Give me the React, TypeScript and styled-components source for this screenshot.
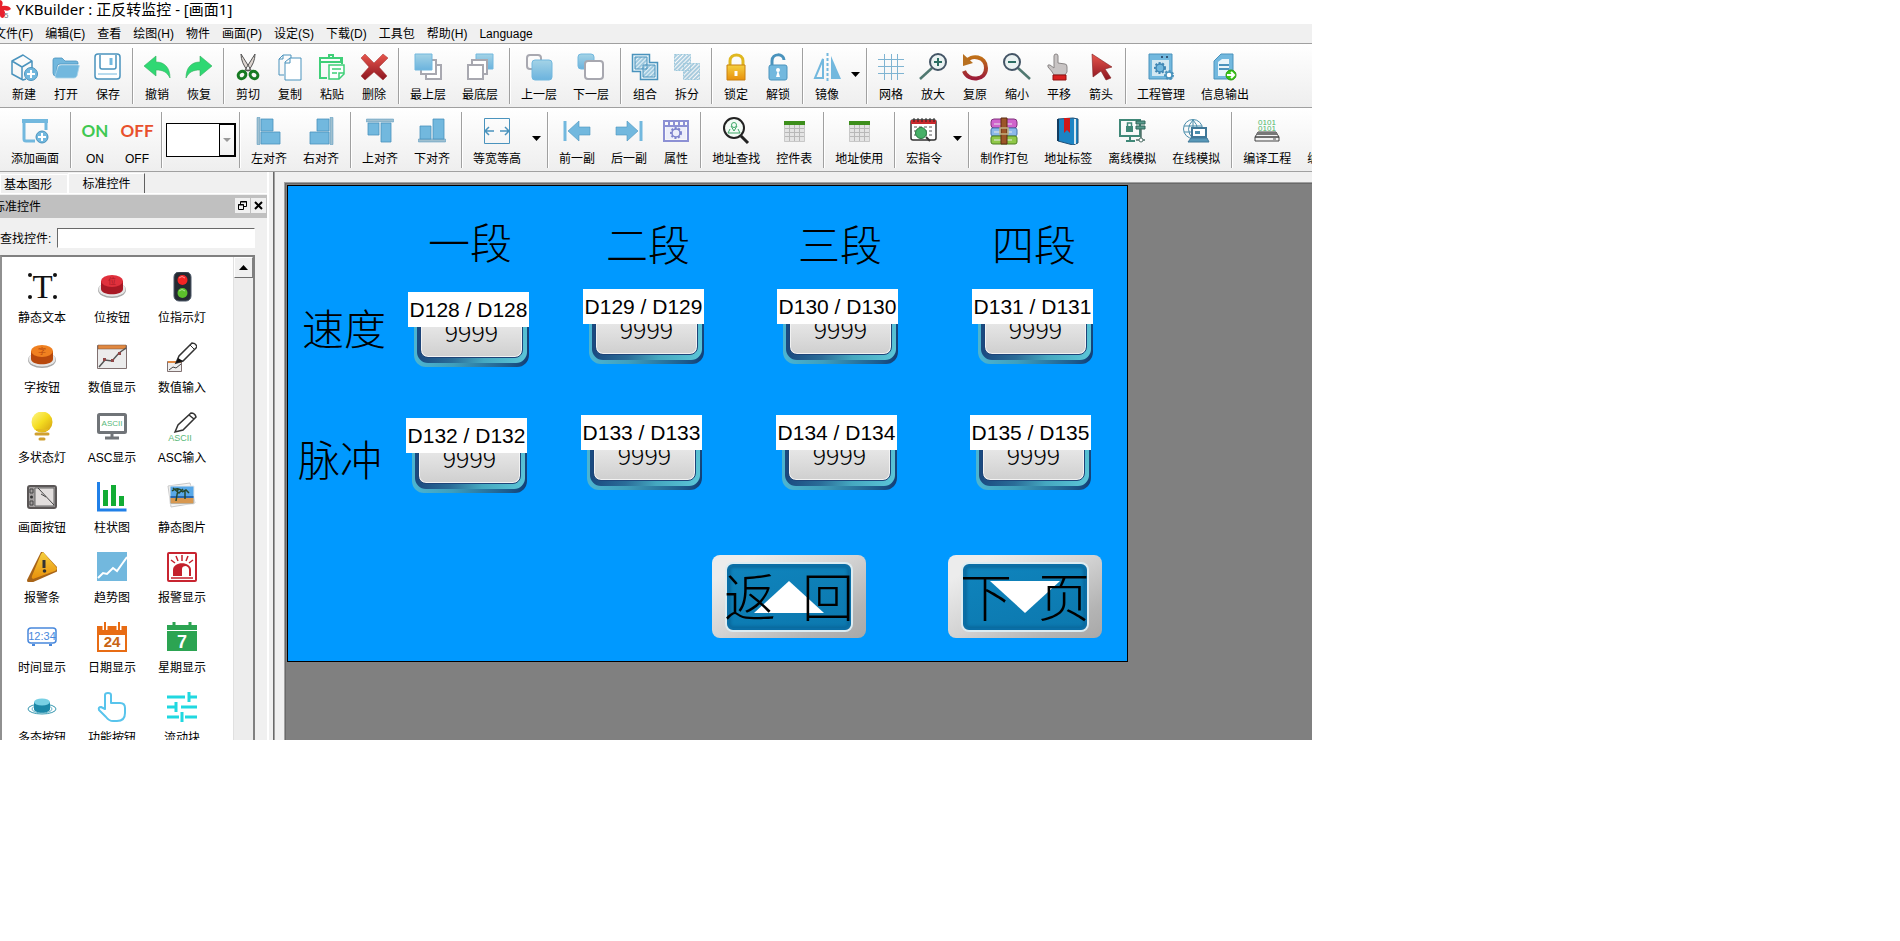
import React, { ReactNode } from "react";
import styled, { createGlobalStyle } from "styled-components";

const uiFont = `"Liberation Sans", "Noto Sans CJK SC", sans-serif`;
const songFont = `"Noto Sans CJK SC", serif`;

const GlobalStyle = createGlobalStyle`
  *, *::before, *::after { box-sizing: border-box; }
  body { margin: 0; background: #fff; font: 12px/16px ${uiFont}; color: #000; }
  button { font: inherit; color: inherit; margin: 0; padding: 0; border: 0; background: none; }
  svg { display: block; }
`;

const Window = styled.div`
  display: flex;
  flex-direction: column;
  width: calc(100% - 588px);
  height: calc(100vh - 201px);
  background: #f0f0f0;
  overflow: hidden;
`;

const TitleBar = styled.header`
  display: flex;
  flex: none;
  gap: 5px;
  height: 24px;
  background: #fff;
`;

const Title = styled.h1`
  margin: 0;
  font: 400 15px/18px "Noto Sans", "Noto Sans CJK SC", sans-serif;
  white-space: nowrap;
`;

const MenuBar = styled.nav`
  display: flex;
  flex: none;
  gap: 12px;
  height: 20px;
  padding-top: 2px;
  border-bottom: 1px solid #a0a0a0;
  white-space: nowrap;
`;

const MenuItem = styled.button`
  flex: none;
  height: 16px;
  &:first-child { margin-left: -6px; }
`;

const ToolBar = styled.div`
  display: flex;
  flex: none;
  height: 64px;
  padding-left: 3px;
  border-bottom: 1px solid #a0a0a0;
  background: linear-gradient(#fff, #eee);
  overflow: hidden;
`;

const Separator = styled.div`
  flex: none;
  width: 2px;
  height: 56px;
  margin: 4px 2px 0 3px;
  border-left: 1px solid #a0a0a0;
  border-right: 1px solid #fff;
`;

const ToolButton = styled.button<{ $narrow?: boolean }>`
  display: flex;
  flex: none;
  flex-direction: column;
  align-items: center;
  gap: 6px;
  min-width: 42px;
  padding: 9px ${(p) => (p.$narrow ? 7 : 8)}px 0;
  white-space: nowrap;
`;

const DropArrow = styled.button`
  display: flex;
  flex: none;
  justify-content: center;
  width: 15px;
  padding-top: 28px;
`;

const Word = styled.span<{ $color: string }>`
  display: flex;
  justify-content: center;
  width: 28px;
  height: 28px;
  font: 700 17px/28px Lato, sans-serif;
  color: ${(p) => p.$color};
`;

const Combo = styled.div`
  display: grid;
  flex: none;
  width: 70px;
  height: 34px;
  margin: 15px 0 0 1px;
  background: #fff;
`;

const ComboSelect = styled.select`
  grid-area: 1 / 1;
  width: 70px;
  height: 34px;
  border: 1px solid #000;
  border-radius: 0;
  background: transparent;
  appearance: none;
`;

const ComboArrow = styled.span`
  display: grid;
  grid-area: 1 / 1;
  place-items: center;
  justify-self: end;
  width: 17px;
  height: 34px;
  border: 2px solid #000;
  border-left-width: 1px;
  background: linear-gradient(#fff, #f0f0f0);
  pointer-events: none;
`;

const Work = styled.div`
  display: flex;
  flex: 1;
  min-height: 0;
`;

const Dock = styled.aside`
  display: flex;
  flex: none;
  flex-direction: column;
  width: 269px;
  border-right: 2px solid #fff;
`;

const Tabs = styled.div`
  display: flex;
  flex: none;
  height: 22px;
  border-bottom: 1px solid #fff;
`;

const Tab = styled.button<{ $active?: boolean }>`
  height: 20px;
  margin-top: ${(p) => (p.$active ? 1 : 2)}px;
  width: ${(p) => (p.$active ? 77 : 68)}px;
  padding-top: 1px;
  padding-right: ${(p) => (p.$active ? 0 : 12)}px;
  border-top: 1px solid #fff;
  border-left: 1px solid #fff;
  border-right: ${(p) => (p.$active ? "1px solid #606060" : "1px solid #fff")};
  white-space: nowrap;
`;

const DockTitle = styled.div`
  display: flex;
  flex: none;
  gap: 1px;
  height: 23px;
  margin-top: 1px;
  padding: 3px 1px 0 0;
  background: #c0c0c0;
`;

const DockName = styled.h2`
  flex: 1;
  margin: 0 0 0 -7px;
  font-weight: 400;
  font-size: 12px;
  line-height: 18px;
`;

const DockButton = styled.button`
  display: grid;
  place-items: center;
  width: 15px;
  height: 15px;
  background: #f0f0f0;
`;

const Search = styled.div`
  display: flex;
  flex: none;
  align-items: center;
  gap: 6px;
  height: 20px;
  margin: 10px 12px 7px 0;
  label { padding-top: 2px; line-height: 20px; white-space: nowrap; }
  input {
    flex: 1;
    min-width: 0;
    height: 20px;
    border: 1px solid;
    border-color: #696969 #fff #fff #696969;
    border-radius: 0;
    background: #fff;
    font: inherit;
  }
`;

const List = styled.div`
  display: flex;
  flex: 1;
  min-height: 0;
  width: 255px;
  border: 2px solid #808080;
  border-bottom: 0;
  border-left-color: #909090;
  background: #fff;
  overflow: hidden;
`;

const Palette = styled.div`
  display: grid;
  flex: 1;
  grid-template-columns: repeat(3, 70px);
  grid-auto-rows: 70px;
  padding: 15px 0 0 5px;
`;

const PaletteItem = styled.button`
  display: flex;
  flex-direction: column;
  align-items: center;
  gap: 8px;
  white-space: nowrap;
`;

const Scroll = styled.div`
  flex: none;
  width: 20px;
  border-left: 1px solid #e0e0e0;
  background: #ededed;
`;

const ScrollButton = styled.button`
  display: grid;
  place-items: center;
  width: 19px;
  height: 21px;
  border: 1px solid;
  border-color: #fff #808080 #707070 #fff;
  background: #f0f0f0;
`;

const Splitter = styled.div`
  flex: none;
  width: 15px;
  border-left: 4px solid #f0f0f0;
  box-shadow: inset 1px 0 #696969, inset 2px 0 #a0a0a0;
`;

const Mdi = styled.main`
  flex: 1;
  margin-top: 10px;
  border: 1px solid #a0a0a0;
  border-width: 1px 0 0 1px;
  box-shadow: inset 1px 1px #696969;
  background: #808080;
  padding: 2px;
  overflow: hidden;
`;

const Screen = styled.section`
  position: relative;
  width: 841px;
  height: 477px;
  border: 1px solid #000;
  background: #0099ff;
`;

const Caption = styled.span<{ $x: number; $y: number }>`
  position: absolute;
  left: ${(p) => p.$x}px;
  top: ${(p) => p.$y}px;
  font: 300 42px/38px ${songFont};
  white-space: nowrap;
`;

const Register = styled.div<{ $x: number; $y: number }>`
  position: absolute;
  left: ${(p) => p.$x}px;
  top: ${(p) => p.$y}px;
  padding: 11px 0 0 6px;
`;

const Address = styled.span`
  position: absolute;
  left: 0;
  top: 0;
  width: 121px;
  height: 35px;
  background: #fff;
  font: 21px/36px ${uiFont};
  text-align: center;
  white-space: nowrap;
`;

const Bezel = styled.div`
  width: 115px;
  height: 64px;
  padding: 2px 2px 4px 3px;
  border-radius: 12px;
  background: linear-gradient(100deg, #4cb4d0 10%, #3f9fbc 40%, #1c5a8c 85%, #123c74);
`;

const Ring = styled.div`
  height: 58px;
  padding: 2px 4px 5px 3px;
  border-radius: 11px;
  background: linear-gradient(105deg, #1a4a80 12%, #2a6c98 40%, #45a8c0 65%, #5cc6d8);
`;

const Face = styled.div`
  height: 51px;
  border: 1px solid #1d4478;
  border-radius: 8px;
  background: linear-gradient(#f4f4f4, #cfcfcf);
  box-shadow: inset 0 0 0 1px #f2f2f2;
  font: 300 25px/46px ${songFont};
  text-align: center;
`;

const PageButton = styled.button<{ $x: number }>`
  position: absolute;
  left: ${(p) => p.$x}px;
  top: 369px;
  display: grid;
  place-items: center;
  width: 154px;
  height: 83px;
  border-radius: 8px;
  background: linear-gradient(150deg, #ececec 15%, #d2d2d2 50%, #b4b4b4 80%, #a8a8a8);
`;

const PageFace = styled.span`
  display: grid;
  place-items: center;
  grid-area: 1 / 1;
  width: 124px;
  height: 66px;
  border: 2px solid #0a6ea6;
  border-radius: 6px;
  background: linear-gradient(165deg, #0f84bd, #0c78ae);
  box-shadow: inset 0 0 3px 2px #0a6a9e, 0 0 0 2px #dcecf2;
`;

const PageText = styled.span`
  grid-area: 1 / 1;
  padding-bottom: 4px;
  font: 300 52px/52px ${songFont};
  white-space: nowrap;
`;

const B = "#72b8de";
const D = "#4a93bd";

const Icon = ({ size = 28, children }: { size?: number; children: ReactNode }) => (
  <svg width={size} height={size} viewBox={`0 0 ${size} ${size}`} fill="none" aria-hidden="true">
    {children}
  </svg>
);

const Shaded = () => (
  <defs>
    <linearGradient id="blue" x1="0" y1="0" x2="0" y2="1"><stop offset="0" stopColor="#a4d3e6" /><stop offset="1" stopColor="#6bb3de" /></linearGradient>
    <linearGradient id="red" x1="0" y1="0" x2="0" y2="1"><stop offset="0" stopColor="#e8564c" /><stop offset="1" stopColor="#8c1520" /></linearGradient>
    <linearGradient id="gold" x1="0" y1="0" x2="0" y2="1"><stop offset="0" stopColor="#f5d040" /><stop offset="1" stopColor="#e8900c" /></linearGradient>
    <linearGradient id="rust" x1="0" y1="0" x2="0" y2="1"><stop offset="0" stopColor="#c07018" /><stop offset="1" stopColor="#9c1c38" /></linearGradient>
    <linearGradient id="bulb" x1="0" y1="0" x2="1" y2="1"><stop offset="0" stopColor="#fff68a" /><stop offset=".5" stopColor="#f4dc20" /><stop offset="1" stopColor="#d09a10" /></linearGradient>
    <pattern id="hatch" width="3" height="3" patternUnits="userSpaceOnUse" patternTransform="rotate(45)"><path d="M1 0V3" stroke="#5a9fc4" strokeWidth="1" /></pattern>
  </defs>
);

const Gear = ({ x, y, r, color, fill = "none" }: { x: number; y: number; r: number; color: string; fill?: string }) => (
  <g>
    <circle cx={x} cy={y} r={r + 1} stroke={color} strokeWidth="2" strokeDasharray="2 1.6" />
    <circle cx={x} cy={y} r={r} stroke={color} strokeWidth="1.5" fill={fill} />
  </g>
);

const Sheet = () => (
  <>
    <path d="M4 4h21v21H4z" fill="#e4e4e4" />
    <path d="M4 4h21v4H4z" fill="#3d8f1c" />
    <path d="M4 11.5h21M4 15.5h21M4 19.5h21M9.5 8v17M14.5 8v17M19.5 8v17" stroke="#b8b8b8" />
    <path d="M4.5 8v16.5h20V8" stroke="#c8c8c8" />
  </>
);

const Compile = () => (
  <>
    <text x="14" y="8" fontSize="8" fontFamily="Liberation Sans" textAnchor="middle" fill="#4cb86a">0101</text>
    <text x="14" y="14" fontSize="8" fontFamily="Liberation Sans" textAnchor="middle" fill="#4cb86a">0101</text>
    <path d="M5 15h18l3 5H2zM2 20h24v4H2z" stroke="#444" fill="#f2f2f2" />
    <path d="M5 15h18l2 3H3z" fill="#777" />
    <path d="M20 22h3" stroke="#555" />
  </>
);

const icons: Record<string, ReactNode> = {
  新建: <><path d="M22 15V8L13 2 2 8v13l11 6 3-1M2 8l10 6 10-6M12 14v12" stroke={D} strokeWidth="1.5" strokeLinejoin="round" /><circle cx="21" cy="21" r="6.5" fill={B} stroke={D} /><path d="M21 17v8M17 21h8" stroke="#fff" strokeWidth="2" /></>,
  打开: <><path d="M1 20V7q0-2 2-2h7l3 3h11q2 0 2 2v1H8q-3 0-3 3l-1 9q-3 0-3-3z" fill={B} stroke={D} strokeWidth=".8" /><path d="M9 12h17q2 0 1 2l-2 9q-1 2-3 2H5q-2 0-2-2l3-9q1-2 3-2z" fill={B} stroke="#a8d4ea" strokeWidth=".8" /></>,
  保存: <><rect x="1" y="1" width="25" height="25" rx="3" stroke={D} strokeWidth="1.5" fill="#fff" /><path d="M6 2v12q0 2 2 2h12q2 0 2-2V2" stroke={D} strokeWidth="1.5" /><path d="M17 5v7" stroke={B} strokeWidth="3" /><path d="M4 21h19" stroke={B} /></>,
  撤销: <path d="M1 13 13 3v6c9 0 14 6 14 16-3-6-7-8-14-8v6z" fill="#2fd873" stroke="#35b060" strokeWidth=".6" />,
  恢复: <path d="M27 13 15 3v6C6 9 1 15 1 25c3-6 7-8 14-8v6z" fill="#2fd873" stroke="#35b060" strokeWidth=".6" />,
  剪切: <><path d="M7 1q5 8 10 16l-3 1Q7 10 7 1zM21 1q-5 8-10 16l3 1Q21 10 21 1z" fill="#ddd5d0" stroke="#555" /><ellipse cx="8" cy="22" rx="4" ry="3.5" stroke="#167a22" strokeWidth="3" transform="rotate(-35 8 22)" /><ellipse cx="20" cy="22" rx="4" ry="3.5" stroke="#167a22" strokeWidth="3" transform="rotate(35 20 22)" /></>,
  复制: <><path d="M8 22H3V6l4-4h8v5M3 6h4V2" stroke={D} /><path d="M9 9l5-4h11v22H9zM9 10h5V5" stroke={D} fill="#fff" /></>,
  粘贴: <><path d="M9 25H2V5h22v6M2 5v4h21V5" stroke="#3fcf78" strokeWidth="2" /><path d="M8 5h10M11 5V2h4v3" stroke="#3fcf78" strokeWidth="2" /><path d="M11 12h15v9l-5 5H11z" fill="#fff" stroke="#3fcf78" strokeWidth="1.5" /><path d="M26 20h-5v6M14 16h9M14 20h5" stroke="#3fcf78" strokeWidth="1.5" /></>,
  删除: <path d="M5 1l9 9 9-9 5 4-9 9 8 9-4 4-9-8-9 8-4-4 8-9-8-9z" fill="url(#red)" stroke="#a03030" strokeWidth=".5" />,
  最上层: <><path d="M12 12h15v14H12z" stroke="#a8a8b0" strokeWidth="2" fill="#fff" /><path d="M7 7h15v14H7z" stroke="#a8a8b0" strokeWidth="2" fill="#fff" /><path d="M1 1h17v16H1z" fill="url(#blue)" stroke={B} /></>,
  最底层: <><path d="M10 1h17v15H10z" fill="url(#blue)" stroke={B} /><path d="M6 7h15v14H6z" stroke="#a8a8b0" strokeWidth="2" fill="#fff" /><path d="M2 12h15v14H2z" stroke="#a8a8b0" strokeWidth="2" fill="#fff" /></>,
  上一层: <><rect x="2" y="2" width="14" height="14" rx="3" stroke="#a8a8b0" strokeWidth="2" /><rect x="7" y="7" width="20" height="20" rx="3" fill="url(#blue)" stroke={B} /></>,
  下一层: <><rect x="1" y="1" width="16" height="15" rx="3" fill="url(#blue)" stroke={B} /><rect x="8" y="8" width="18" height="18" rx="3" fill="#fff" stroke="#a8a8b0" strokeWidth="2" /></>,
  组合: <><path d="M1.5 1.5h17v8h8v17h-17v-8h-8z" stroke={D} strokeWidth="1.5" fill="#e6f3f9" /><path d="M4 4h12v12H4zM12 12h12v12H12z" fill="url(#hatch)" stroke={D} /></>,
  拆分: <path d="M1.5 1.5h16v16h-16zM10.5 10.5h16v16h-16z" fill="url(#hatch)" stroke="#9cc8dc" strokeDasharray="2 1" />,
  锁定: <><path d="M8 13V8c0-8 13-8 13 0v5" stroke="#e0b820" strokeWidth="3" /><path d="M5 12h18v15H5z" fill="url(#gold)" stroke="#c88010" /><path d="M14 18v5" stroke="#fff" strokeWidth="3" /></>,
  解锁: <><path d="M8 13V8c0-8 12-8 12-1" stroke={D} strokeWidth="3" /><rect x="5" y="12" width="18" height="15" rx="2" fill={B} stroke={D} /><circle cx="14" cy="17" r="2" fill="#fff" /><path d="M14 17l-2 7h4z" fill="#fff" /></>,
  镜像: <><path d="M10 6v19H2z" stroke={B} strokeWidth="2" /><path d="M18 3v23h10z" fill={B} /><path d="M14.5 0v28" stroke={B} strokeWidth="2" strokeDasharray="3 2" /></>,
  网格: <path d="M7.5 1v26M14.5 1v26M20.5 1v26M1 6.5h26M1 13.5h26M1 20.5h26" stroke="#7fb4d2" />,
  放大: <><path d="M13 15 1 26" stroke="#507870" strokeWidth="2.5" /><circle cx="19" cy="9" r="8" fill="#eaf2f2" stroke="#456" strokeWidth="2" /><path d="M19 5v8M15 9h8" stroke="#2b6d62" strokeWidth="2" /></>,
  复原: <><path d="M5 9C10 1 25 3 25 15 25 28 7 29 3 18" stroke="url(#rust)" strokeWidth="4" /><path d="M2 1v12l10-3z" fill="#b87020" /></>,
  缩小: <><path d="M15 15 27 26" stroke="#507870" strokeWidth="2.5" /><circle cx="9" cy="9" r="8" fill="#eaf2f2" stroke="#456" strokeWidth="2" /><path d="M5 9h8" stroke="#2b6d62" strokeWidth="2" /></>,
  平移: <><path d="M9 3q0-2 2-2t2 2v7l7 1q2 0 2 3v5l-2 3H9q-2-4-6-8-1-3 2-2l4 3z" fill="#c8c4c4" stroke="#8a8686" /><path d="M8 22h13v5H8z" fill="#d82020" stroke="#901010" /></>,
  箭头: <path d="M5 1 25 14l-7 2 6 9-5 2-5-9-8 6z" fill="url(#red)" stroke="#802020" strokeWidth=".6" />,
  工程管理: <><path d="M2 1h23v25H2z" fill={B} stroke={D} /><path d="M5 7h17v16H5z" fill="#d4e8f2" /><path d="M14 4h2M19 4h2" stroke="#357" strokeWidth="2" /><Gear x={13} y={15} r={4} color="#3f86b4" fill={B} /><Gear x={22} y={22} r={3} color={D} fill="#fff" /></>,
  信息输出: <><path d="M10 1h12v25H3V8z" fill={B} stroke={D} /><path d="M11 6h7v17H7V9z" fill="#e8f4fa" /><path d="M8 12h10M8 16h10" stroke={D} strokeWidth="2" /><circle cx="20" cy="22" r="5" fill="#38c814" stroke="#2a9a10" /><path d="M16 22h6M20 19l3 3-3 3" stroke="#fff" strokeWidth="2" /></>,
  添加画面: <><path d="M14 24H5q-2 0-2-2V4h22v9" stroke={B} strokeWidth="3" /><path d="M1 2h26v4H1z" fill={B} /><circle cx="21" cy="20" r="6" fill={B} stroke={D} /><path d="M21 16v8M17 20h8" stroke="#fff" strokeWidth="2" /></>,
  左对齐: <><path d="M2 .5h3v27H2z" fill="#a0c0d0" stroke={D} strokeWidth=".5" /><path d="M6 2h12v12H6zM6 15h19v12H6z" fill={B} stroke={D} strokeWidth=".8" /></>,
  右对齐: <><path d="M23 .5h3v27h-3z" fill="#a0c0d0" stroke={D} strokeWidth=".5" /><path d="M10 2h12v12H10zM3 15h19v12H3z" fill={B} stroke={D} strokeWidth=".8" /></>,
  上对齐: <><path d="M.5 2h27v3H.5z" fill="#a0c0d0" stroke={D} strokeWidth=".5" /><path d="M2 6h11v12H2zM15 6h10v19H15z" fill={B} stroke={D} strokeWidth=".8" /></>,
  下对齐: <><path d="M.5 22h27v3H.5z" fill="#a0c0d0" stroke={D} strokeWidth=".5" /><path d="M2 9h11v13H2zM15 2h11v20H15z" fill={B} stroke={D} strokeWidth=".8" /></>,
  等宽等高: <><path d="M1.5 1.5h25v25h-25z" stroke={D} /><path d="M2 14h9M6 10l-4 4 4 4M17 14h9M22 10l4 4-4 4" stroke={D} strokeWidth="1.5" /></>,
  前一副: <><path d="M2 4v20" stroke={B} strokeWidth="3" /><path d="M5 14 16 4v6h11v8H16v6z" fill={B} stroke={D} strokeWidth=".6" /></>,
  后一副: <><path d="M26 4v20" stroke={B} strokeWidth="3" /><path d="M23 14 12 4v6H1v8h11v6z" fill={B} stroke={D} strokeWidth=".6" /></>,
  属性: <><path d="M2 4h24v20H2zM2 9h24M7 3v6M12 3v6M17 3v6M22 3v6" stroke="#8c90d4" strokeWidth="2" /><path d="M4 10h20v12H4z" fill="#eceefa" /><Gear x={14} y={16} r={4} color="#7c82cc" /></>,
  地址查找: <><path d="M19 19 26 26" stroke="#222" strokeWidth="3" /><circle cx="12" cy="11" r="10" fill="#f4fbf6" stroke="#222" strokeWidth="2" /><circle cx="12" cy="8" r="2.5" stroke="#3fa868" /><path d="M12 14l-3-5M12 14l3-5M8 12l-2 4h12l-2-4" stroke="#3fa868" /></>,
  控件表: <Sheet />,
  地址使用: <Sheet />,
  宏指令: <><rect x="1" y="3" width="25" height="20" rx="2" fill="#fff" stroke="#333" strokeWidth="1.5" /><path d="M1 3h25v4H1z" fill="#c8282c" /><path d="M4 1v4M8 1v4M12 1v4M16 1v4M20 1v4M24 1v4" stroke="#222" /><path d="M4 10h20M4 14h20M4 18h20" stroke="#555" strokeDasharray="3 2" /><circle cx="11" cy="16" r="5.5" fill="#48b068" stroke="#287a40" /><path d="M16 20l4 4" stroke="#333" strokeWidth="2" /></>,
  制作打包: <><rect x="1" y="2" width="26" height="9" rx="3" fill="#d064cc" stroke="#80307c" /><rect x="1" y="11" width="26" height="8" rx="2" fill="#8cb8ea" stroke="#4472ac" /><rect x="1" y="19" width="26" height="8" rx="2" fill="#90c848" stroke="#4c8020" /><path d="M4 7h18M4 15h18M4 23h18" stroke="#e8e8e8" /><path d="M11 1h6v26h-6z" fill="#9c5628" stroke="#5c2c10" /><path d="M10 11h8v6h-8z" stroke="#c0b080" strokeWidth="1.5" /></>,
  地址标签: <><path d="M4 2 19 1l5 1v24l-5 2L4 24z" fill="#1c84c4" stroke="#205078" /><path d="M4 2v22" stroke="#123c60" strokeWidth="2" /><path d="M21 2v25" stroke="#d8e8f0" strokeWidth="2" /><path d="M10 1h6v15l-3-3-3 3z" fill="#d01818" /></>,
  离线模拟: <><path d="M2 3h20v16H2zM8 24h9M12 19v5" stroke="#408878" strokeWidth="2" /><path d="M8 9h7v6H8z" fill="#408878" /><path d="M9.5 9V6h4v3" stroke="#408878" strokeWidth="1.5" /><path d="M18 4h9v3h-9zM18 9h9v3h-9z" fill="#58998c" stroke="#306458" /><path d="M23 12v9M18 23h9" stroke="#507068" strokeWidth="1.5" /><circle cx="23" cy="23" r="2" fill="#fff" stroke="#507068" /></>,
  在线模拟: <><circle cx="11" cy="12" r="9.5" stroke="#4a8dab" /><path d="M11 3v19M2 9h18M2 15h18M11 3q-9 9 0 19M11 3q9 9 0 19" stroke="#4a8dab" /><path d="M10 11h14v9H10z" fill="#fff" stroke="#407898" strokeWidth="2" /><path d="M13 14h5v3h-5z" fill="#4a8dab" /><path d="M9 21h16l2 4H6z" fill="#5898b8" stroke="#407898" /></>,
  编译工程: <Compile />,
  编译下载: <Compile />,
};

const PushCap = ({ color, dark, label }: { color: string; dark: string; label: string }) => (
  <>
    <ellipse cx="15" cy="18" rx="14" ry="8" fill="#a8a8a8" />
    <ellipse cx="15" cy="17" rx="13.5" ry="7.5" fill="#e6e6e6" />
    <path d="M4 9v8c0 7 22 7 22 0V9z" fill={dark} />
    <ellipse cx="15" cy="9" rx="11" ry="6" fill={color} />
    <text x="15" y="12" fontSize="8" textAnchor="middle" fontFamily="Noto Sans CJK SC" fill={dark}>{label}</text>
  </>
);

const palette: [string, ReactNode][] = [
  ["静态文本", <><circle cx="3" cy="3" r="2" fill="#111" /><circle cx="28" cy="3" r="2" fill="#111" /><circle cx="3" cy="25" r="2" fill="#111" /><circle cx="28" cy="25" r="2" fill="#111" /><text x="15.5" y="26" fontSize="33" fontFamily="Liberation Serif" textAnchor="middle" fill="#111">T</text></>],
  ["位按钮", <PushCap color="#e0303c" dark="#a81824" label="位" />],
  ["位指示灯", <><rect x="7" y="0" width="17" height="29" rx="5" fill="#252a32" stroke="#4c5868" /><circle cx="15.5" cy="8" r="5" fill="#f42424" /><circle cx="15.5" cy="21" r="5" fill="#5cc02c" /><path d="M12 6q3-3 6 0M12 19q3-3 6 0" stroke="#fff" strokeOpacity=".5" /></>],
  ["字按钮", <PushCap color="#f08020" dark="#b8480c" label="字" />],
  ["数值显示", <><path d="M.5 3.5h29v23H.5z" fill="#ececec" stroke="#807070" /><path d="M1 3h28v4H1z" fill="#e08840" stroke="#705040" strokeWidth=".5" /><path d="M2 25l6-7 7 1 7-8 7-5" stroke="#555" strokeWidth="1.5" /><path d="M6 16h3v3H6zM14 17h3v3h-3zM21 10h3v3h-3z" fill="#904848" /></>],
  ["数值输入", <><path d="M.5 19.5h14v10H.5z" fill="#eee" stroke="#807070" /><path d="M1 19h13v2H1z" fill="#e08840" /><path d="M2 28l4-3 3 1 5-4" stroke="#444" /><path d="M9 21l3-7L25 1q4 0 5 4L16 19z" fill="#fff" stroke="#333" strokeWidth="1.5" /><path d="M23 3l4 4" stroke="#333" /><path d="M9 21l2-5 5 3z" fill="#111" /></>],
  ["多状态灯", <><circle cx="15" cy="10" r="10.5" fill="url(#bulb)" /><path d="M9 17h12v2H9z" fill="#e4bc20" /><path d="M9 22h12M13 27h4" stroke="#d0a030" strokeWidth="3" strokeLinecap="round" /></>],
  ["ASC显示", <><rect x="1.5" y="2.5" width="27" height="18" rx="1" fill="#fff" stroke="#707478" strokeWidth="3" /><path d="M15 22v4M8 26h14" stroke="#707478" strokeWidth="3" /><text x="15" y="14" fontSize="8" fontFamily="Liberation Sans" textAnchor="middle" fill="#58b878">ASCII</text></>],
  ["ASC输入", <><path d="M8 20l3-7L24 1q4 0 5 4L16 18zM22 3l5 4" fill="#fff" stroke="#333" strokeWidth="1.5" /><text x="13" y="29" fontSize="9" fontFamily="Liberation Sans" textAnchor="middle" fill="#58b878">ASCII</text></>],
  ["画面按钮", <><rect x="1" y="4" width="28" height="22" rx="2" fill="#a4a0a0" stroke="#5a5656" strokeWidth="2" /><path d="M8 6h19v18H8z" fill="#e2dedd" stroke="#666" /><path d="M11 6l16 17M14 12l5 3" stroke="#444" /><path d="M3 7h3v4H3zM3 19h3v4H3z" stroke="#444" /><circle cx="4.5" cy="15" r="1.5" fill="#333" /></>],
  ["柱状图", <><path d="M1.5 0v28h28" stroke="#2080e8" strokeWidth="3" /><path d="M6 8h5v16H6zM14 3h5v21h-5zM22 14h5v10h-5z" fill="#12ac34" /></>],
  ["静态图片", <><path d="M1 4l22-3 5 20-24 4z" fill="#f6f6f6" stroke="#c8c8c8" /><path d="M3 4h24v18H3z" fill="#58a8e8" stroke="#e8e8e8" /><path d="M3.5 16h23v5.5h-23z" fill="#d89850" /><path d="M3.5 14h23v2h-23z" fill="#2868b0" /><path d="M9 19l2-12M5 9q6-5 11 1M6 6l6 5 4-4M18 17V9M15 10l4-2 3 3" stroke="#28482c" strokeWidth="1.5" /></>],
  ["报警条", <><path d="M14 0q2-1 3 1l14 15q1 3-2 4L4 31q-4 0-4-3z" fill="#a86418" /><path d="M16 0l14 16q0 2-2 3L6 27q-2-1-1-3L14 2z" fill="url(#gold)" /><path d="M17 8v8" stroke="#333" strokeWidth="3" /><circle cx="17.5" cy="19" r="1.8" fill="#333" /></>],
  ["趋势图", <><path d="M0 0h30v29H0z" fill={B} /><path d="M1 26l5-5 4 1 6-6 4 3 5-7 5-7" stroke="#fff" strokeWidth="2" /></>],
  ["报警显示", <><rect x="1" y="1" width="28" height="28" rx="1" fill="#fff" stroke="#c82430" strokeWidth="2" /><path d="M6 24V18c0-9 18-9 18 0v6z" fill="#c4202c" /><path d="M15 24v-7q0-3 4-3 3 1 3 4v6z" fill="#fff" /><path d="M4 26h22M15 3v6M9 4l2 5M21 4l-2 5M4 8l4 3M26 8l-4 3" stroke="#c4202c" strokeWidth="1.5" /></>],
  ["时间显示", <><rect x="1" y="6" width="28" height="15" rx="3" fill="#fff" stroke="#4888dc" strokeWidth="1.5" /><path d="M5 23h3M22 23h3" stroke="#4888dc" strokeWidth="2" /><text x="15" y="18" fontSize="11" fontFamily="Liberation Sans" textAnchor="middle" fill="#4888dc">12:34</text></>],
  ["日期显示", <><path d="M1 5h28v24H1z" fill="#fff" stroke="#e86c14" strokeWidth="2" /><path d="M0 4h30v9H0z" fill="#e86c14" /><path d="M8 0v8M22 0v8" stroke="#fff" strokeWidth="5" /><path d="M8 0v8M22 0v8" stroke="#e86c14" strokeWidth="2" /><text x="15" y="25" fontSize="15" fontWeight="700" fontFamily="Liberation Sans" textAnchor="middle" fill="#c86414">24</text></>],
  ["星期显示", <><path d="M0 3h30v5H0zM0 9h30v20H0z" fill="#2ca452" /><path d="M7 0v4M23 0v4" stroke="#2ca452" strokeWidth="3" /><text x="15" y="26" fontSize="18" fontWeight="700" fontFamily="Liberation Sans" textAnchor="middle" fill="#fff">7</text></>],
  ["多态按钮", <><ellipse cx="15" cy="17" rx="14" ry="5" stroke="#3898b0" /><ellipse cx="15" cy="17" rx="10" ry="4" stroke="#68b8cc" /><path d="M7 10v7c0 5 16 5 16 0v-7z" fill="#1c88a8" /><ellipse cx="15" cy="10" rx="8" ry="3.5" fill="#78d0e4" /></>],
  ["功能按钮", <path d="M8 17V3q0-2 3-2t3 2v8h9q5 0 5 5v5q0 8-8 8h-4q-4 0-7-4l-7-7q-1-3 2-3z" stroke="#58c4ec" strokeWidth="2" strokeLinejoin="round" />],
  ["流动块", <path d="M0 5h18M22 5h8M22 0v10M0 15h6M14 15h16M9 10v10M4 15h5M0 25h12M18 25h12M15 20v10" stroke="#20d8e0" strokeWidth="3" />],
];

const Tool = ({ name }: { name: string }) => (
  <ToolButton type="button" $narrow={name.length < 3}>
    <Icon>{icons[name]}</Icon>
    {name}
  </ToolButton>
);

const Down = () => (
  <DropArrow type="button" aria-label="更多">
    <svg width="9" height="5" viewBox="0 0 9 5"><path d="M0 0h9L4.5 5z" /></svg>
  </DropArrow>
);

const Group = ({ names, more, first }: { names: string[]; more?: boolean; first?: boolean }) => (
  <>
    {!first && <Separator />}
    {names.map((n) => <Tool key={n} name={n} />)}
    {more && <Down />}
  </>
);

const menus = ["文件(F)", "编辑(E)", "查看", "绘图(H)", "物件", "画面(P)", "设定(S)", "下载(D)", "工具包", "帮助(H)", "Language"];

const captions: [string, number, number][] = [
  ["一段", 140, 36], ["二段", 318, 38], ["三段", 510, 38], ["四段", 704, 38],
  ["速度", 14, 122], ["脉冲", 10, 253],
];

const registers: [string, number, number][] = [
  ["D128", 120, 106], ["D129", 295, 103], ["D130", 489, 103], ["D131", 684, 103],
  ["D132", 118, 232], ["D133", 293, 229], ["D134", 488, 229], ["D135", 682, 229],
];

export default function App() {
  return (
    <>
      <GlobalStyle />
      <Window>
        <TitleBar>
          <svg width="11" height="20" viewBox="0 0 11 20" aria-hidden="true">
            <path d="M0 0q4 1 2 6 7-1 9 3-3 3-7 1 3 5-1 8-3 0-3-3z" fill="#e8202c" />
            <text x="4" y="18" fontSize="8" fontFamily="Liberation Sans" fill="#777">5</text>
          </svg>
          <Title>YKBuilder : 正反转监控 - [画面1]</Title>
        </TitleBar>
        <MenuBar>
          {menus.map((m) => <MenuItem type="button" key={m}>{m}</MenuItem>)}
        </MenuBar>
        <ToolBar>
          <svg width="0" height="0"><Shaded /></svg>
          <Group first names={["新建", "打开", "保存"]} />
          <Group names={["撤销", "恢复"]} />
          <Group names={["剪切", "复制", "粘贴", "删除"]} />
          <Group names={["最上层", "最底层"]} />
          <Group names={["上一层", "下一层"]} />
          <Group names={["组合", "拆分"]} />
          <Group names={["锁定", "解锁"]} />
          <Group names={["镜像"]} more />
          <Group names={["网格", "放大", "复原", "缩小", "平移", "箭头"]} />
          <Group names={["工程管理", "信息输出"]} />
        </ToolBar>
        <ToolBar>
          <Group first names={["添加画面"]} />
          <Separator />
          <ToolButton type="button" $narrow><Word $color="#3fc852">ON</Word>ON</ToolButton>
          <ToolButton type="button" $narrow><Word $color="#e8502c">OFF</Word>OFF</ToolButton>
          <Separator />
          <Combo>
            <ComboSelect aria-label="状态" defaultValue=""><option value="" /></ComboSelect>
            <ComboArrow><svg width="8" height="4" viewBox="0 0 8 4"><path d="M0 0h8L4 4z" fill="#999" /></svg></ComboArrow>
          </Combo>
          <Group names={["左对齐", "右对齐"]} />
          <Group names={["上对齐", "下对齐"]} />
          <Group names={["等宽等高"]} more />
          <Group names={["前一副", "后一副", "属性"]} />
          <Group names={["地址查找", "控件表"]} />
          <Group names={["地址使用"]} />
          <Group names={["宏指令"]} more />
          <Group names={["制作打包", "地址标签", "离线模拟", "在线模拟"]} />
          <Group names={["编译工程", "编译下载"]} />
        </ToolBar>
        <Work>
          <Dock>
            <Tabs>
              <Tab type="button">基本图形</Tab>
              <Tab type="button" $active>标准控件</Tab>
            </Tabs>
            <DockTitle>
              <DockName>标准控件</DockName>
              <DockButton type="button" aria-label="浮动">
                <svg width="9" height="9" viewBox="0 0 9 9" fill="none" stroke="#000"><path d="M2.5 3V.5h6v5H6M3 1h6M.5 3.5h5v5h-5zM0 4h6" /></svg>
              </DockButton>
              <DockButton type="button" aria-label="关闭">
                <svg width="9" height="9" viewBox="0 0 9 9"><path d="M1 1l7 7M8 1 1 8" stroke="#000" strokeWidth="2" /></svg>
              </DockButton>
            </DockTitle>
            <Search>
              <label htmlFor="find">查找控件:</label>
              <input id="find" type="text" />
            </Search>
            <List>
              <Palette>
                {palette.map(([name, art]) => (
                  <PaletteItem type="button" key={name}>
                    <Icon size={30}>{art}</Icon>
                    {name}
                  </PaletteItem>
                ))}
              </Palette>
              <Scroll>
                <ScrollButton type="button" aria-label="向上">
                  <svg width="9" height="5" viewBox="0 0 9 5"><path d="M0 5h9L4.5 0z" /></svg>
                </ScrollButton>
              </Scroll>
            </List>
          </Dock>
          <Splitter />
          <Mdi>
            <Screen>
              {captions.map(([t, x, y]) => <Caption key={t} $x={x} $y={y}>{t}</Caption>)}
              {registers.map(([r, x, y]) => (
                <Register key={r} $x={x} $y={y}>
                  <Bezel><Ring><Face>9999</Face></Ring></Bezel>
                  <Address>{r} / {r}</Address>
                </Register>
              ))}
              <PageButton type="button" $x={424}>
                <PageFace><svg width="70" height="32" viewBox="0 0 70 32"><path d="M35 0 70 32H0z" fill="#fff" /></svg></PageFace>
                <PageText>返&ensp;回</PageText>
              </PageButton>
              <PageButton type="button" $x={660}>
                <PageFace><svg width="70" height="32" viewBox="0 0 70 32"><path d="M35 32 70 0H0z" fill="#fff" /></svg></PageFace>
                <PageText>下&ensp;页</PageText>
              </PageButton>
            </Screen>
          </Mdi>
        </Work>
      </Window>
    </>
  );
}
